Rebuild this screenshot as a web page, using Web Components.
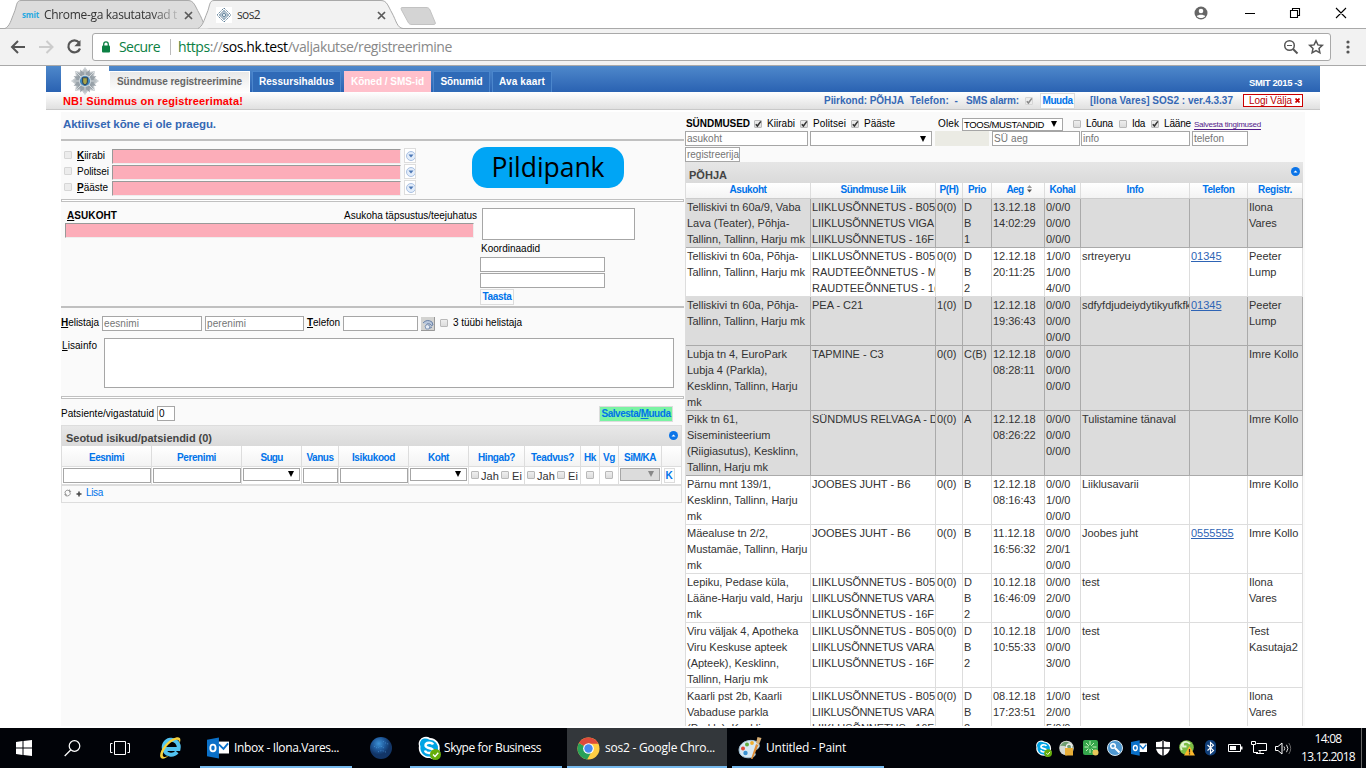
<!DOCTYPE html>
<html lang="et">
<head>
<meta charset="utf-8">
<title>sos2</title>
<style>
html,body{margin:0;padding:0;background:#fff}
body{width:1366px;height:768px;overflow:hidden;display:flex;flex-direction:column;font:11px/16px "Liberation Sans",Arial,sans-serif;color:#000}
</style>
</head>
<body>
<browser-frame></browser-frame>
<sos-app></sos-app>
<task-bar></task-bar>
<script>
const define = (name, css, html) => customElements.define(name, class extends HTMLElement {
  constructor() {
    super();
    this.attachShadow({mode: 'open'}).innerHTML = `<style>*{box-sizing:border-box}${css}</style>${html}`;
  }
});

/* Text that is tracked to fill a given width (w, in pixels). */
customElements.define('fit-text', class extends HTMLElement {
  constructor() {
    super();
    this.attachShadow({mode: 'open'}).innerHTML = '<style>:host{display:inline-block;white-space:pre;flex:none}span{display:inline-block}</style><span><slot></slot></span>';
  }
  connectedCallback() {
    const w = parseFloat(this.getAttribute('w'));
    if (!w) return;
    const s = this.shadowRoot.querySelector('span');
    s.style.letterSpacing = '0px';
    const n = this.textContent.length;
    s.style.letterSpacing = ((w - s.getBoundingClientRect().width) / n) + 'px';
    this.style.width = w + 'px';
  }
});
const T = (w, t, x = 0, st = '') => `<fit-text w="${w}" style="margin-left:${x}px;${st}">${t}</fit-text>`;

define('ui-check', `:host{display:block;flex:none;width:8px;height:8px;border:1px solid #b9b9b9;border-radius:1px;background:linear-gradient(#eee,#dcdcdc);box-sizing:border-box}
:host([dim]){border-color:#d6d6d6;background:#ececec}
svg{display:none;overflow:visible}:host([on]) svg{display:block}:host([dim]) path{stroke:#888}`,
`<svg width="6" height="6" viewBox="0 0 6 6"><path d="M.8 3.2 2.4 5 5.8.4" fill="none" stroke="#333" stroke-width="1.5"/></svg>`);
const C = (x, a = '') => `<ui-check ${a} style="margin-left:${x}px;margin-top:-1px"></ui-check>`;

define('ui-field', `:host{display:flex;align-items:center;flex:none;box-sizing:border-box;height:15px;border:1px solid #a6a6a6;background:#fff;color:#757575;padding-left:1px;overflow:hidden;line-height:15px;white-space:nowrap}
:host([req]){background:#fcadb9;border-color:#999 #eee #eee #999}
:host([off]){background:#dcdcdc}
i{display:none;margin-left:auto;margin-right:5px;border:3.5px solid transparent;border-top:6px solid #000;border-bottom:0}
:host([sel]) i{display:block}:host([off]) i{border-top-color:#888}`, `<slot></slot><i></i>`);
const F = (x, w, t = '', a = '', st = '') => `<ui-field ${a} style="margin-left:${x}px;width:${w}px;${st}">${t}</ui-field>`;

define('ui-button', `:host{display:flex;align-items:center;justify-content:center;flex:none;box-sizing:border-box;height:16px;border:1px solid #dcdcdc;background:#fcfcfc;color:#0073ea;font-weight:bold;font-size:10px;line-height:14px}`, `<slot></slot>`);

define('ui-collapse', `:host{display:block;flex:none;width:9px;height:9px}svg{display:block}`,
`<svg width="9" height="9" viewBox="0 0 8 8"><circle cx="4" cy="4" r="4" fill="#0b74e8"/><path d="M2.200 4.800 4 3.200l1.800 1.600z" fill="#fff"/></svg>`);

/* ---------- browser ---------- */
define('browser-tab', `:host{display:flex;align-items:center;position:relative;flex:none;width:204px;height:29px;font:12px/29px "Open Sans",sans-serif;color:#333;box-sizing:border-box}
.b{position:absolute;left:0;top:0;z-index:0}.b path{fill:#dcdcdc;stroke:#a9a9a9}:host([active]){z-index:1}:host([active]) .b path{fill:#f2f2f2}
slot,.x{position:relative}.c{display:flex;align-items:center;position:relative;width:161px;margin-left:17px;overflow:hidden}.x{margin-left:1px;margin-top:1px}`,
`<svg class="b" width="206" height="29"><path d="M0 28.5C5 26 6 20 9 13S11 .5 16 .5H183C189 .5 190 6 194 13S199 28 205 28.5"/></svg><div class="c"><slot></slot></div><svg class="x" width="9" height="9" viewBox="0 0 9 9"><path d="m1 1 7 7M8 1 1 8" stroke="#5a5a5a" stroke-width="1.7"/></svg>`);

define('browser-frame', `:host{display:block;flex:none;height:66px;font-family:"Open Sans",sans-serif;background:#f2f2f2}
.tabs{display:flex;height:29px;background:#fff;border-bottom:1px solid #a9a9a9}
.tabs browser-tab[active]{margin-left:-11px}.tabs svg{flex:none;display:block}
.fade{-webkit-mask:linear-gradient(90deg,#000 112px,transparent 144px);width:138px}
.bar{display:flex;align-items:center;height:37px;border-bottom:1px solid #a9a9a9;padding-left:10px}
.bar svg{flex:none;display:block}
.omni{display:flex;align-items:center;width:1239px;height:28px;margin-left:10px;border:1px solid #a9a9a9;border-radius:3px;background:#fff;font-size:14px;line-height:26px;margin-top:-1px}
.g{color:#0b8043}.s{color:#888}`,
`<div class="tabs">
<browser-tab style="margin-left:5px"><span style="font:bold 8px/14px 'Open Sans',sans-serif;color:#27a9e1">${T(17,'smit')}</span><span class="fade">${T(133,'Chrome-ga kasutatavad t',5)}</span></browser-tab>
<browser-tab active><svg width="16" height="16" viewBox="0 0 16 16" style="margin-left:1px"><path fill="#fff" d="M0 0h16v16H0z"/><g fill="none" stroke="#5f7f98"><path d="m8 1 7 7-7 7-7-7z" stroke-dasharray="1.5 .8"/><path d="m8 3.5 4.5 4.5L8 12.500 3.500 8z"/><path d="M8 3v10M3 8h10" stroke="#8aa4b7"/><circle cx="8" cy="8" r="1.800" fill="#dfe8ee"/></g></svg>${T(23,'sos2',5)}</browser-tab>
<svg width="38" height="22" style="margin:6px 0 0 -2px"><path d="M2 1.500H26C28 1.500 29 2 30 4L35 16C36 18 35 18.500 33 18.500H12C10 18.500 9 18 8 16L1.500 4C.8 2.500 1 1.500 2 1.500z" fill="#d4d4d4" stroke="#c2c2c2"/></svg>
<svg width="14" height="14" viewBox="0 0 14 14" style="margin:6px 0 0 756px"><circle cx="7" cy="7" r="6.500" fill="#666"/><circle cx="7" cy="5" r="2.300" fill="#fff"/><path d="M2.800 10.200C4 8.200 10 8.200 11.200 10.200 9.500 12.600 4.500 12.600 2.800 10.200z" fill="#fff"/></svg>
<svg width="130" height="26" style="margin-left:30px"><g fill="none" stroke="#000" stroke-width="1.100"><path d="M7 13.500h10M52.500 17.500V10.500h7v7zM54.500 10.500V8.500h7v7H59.500M98 8l10 10M108 8 98 18"/></g></svg>
</div>
<div class="bar">
<svg width="72" height="20" viewBox="0 0 72 20"><path d="M15 10H2M8 4l-6 6 6 6" fill="none" stroke="#555" stroke-width="2"/><path d="M29 10h13M36.500 4l6 6-6 6" fill="none" stroke="#ccc" stroke-width="2"/><path d="M69 5.500A6 6 0 1 0 70 11.500" fill="none" stroke="#555" stroke-width="2.200"/><path d="M70.500 3v6.200h-6.200z" fill="#555"/></svg>
<div class="omni"><svg width="8" height="12" viewBox="0 0 8 12" style="margin-left:9px"><rect y="4.500" width="8" height="7" rx="1" fill="#0b8043"/><path d="M1.700 5V3.200a2.300 2.300 0 0 1 4.600 0V5" fill="none" stroke="#0b8043" stroke-width="1.300"/></svg>
${T(41,'Secure',9,'color:#0b8043')}<span style="width:1px;height:16px;background:#bbb;margin:0 7px 0 10px"></span>${T(274,'<span class="g">https</span><span class="s">://</span>sos.hk.test<span class="s">/valjakutse/registreerimine</span>')}
<svg width="42" height="16" viewBox="0 0 42 16" style="margin-left:auto;margin-right:5px"><g fill="none" stroke="#555"><circle cx="6.500" cy="6.500" r="4.800" stroke-width="1.500"/><path d="m10 10 4.500 4.500" stroke-width="2"/><path d="M4 6.500h5"/><path d="m33 1.800 1.900 4.100 4.400.5-3.300 3 .9 4.400-3.900-2.200-3.900 2.200.9-4.400-3.300-3 4.400-.5z" stroke-width="1.500"/></g></svg></div>
<svg width="4" height="14" style="margin-left:15px"><g fill="#555"><circle cx="2" cy="2" r="1.600"/><circle cx="2" cy="7" r="1.600"/><circle cx="2" cy="12" r="1.600"/></g></svg>
</div>`);

/* ---------- application header ---------- */
const star = (n, R, r) => Array.from({length: n * 2}, (_, i) => {
  const a = Math.PI * i / n, d = i % 2 ? r : R;
  return `${(13 + d * Math.sin(a)).toFixed(1)},${(13 - d * Math.cos(a)).toFixed(1)}`;
}).join(' ');
define('app-header', `:host{display:block;width:1274px;margin-left:46px;flex:none;font-size:10px}
.top{display:flex;height:26px;background:linear-gradient(#4e88cb,#2a62b2);padding-left:15px;font-weight:bold;color:#fff;box-shadow:0 1px 0 #cfe0f2}
.logo{width:48px;height:27px;background:#fff;display:flex;justify-content:center;position:relative}
.t{height:21px;margin-top:5px;border:1px solid #4b86cc;border-bottom:0;background:#2f6ab7;display:flex;align-items:center;justify-content:center;flex:none}
.a{background:linear-gradient(#e8e8e8,#fff);color:#666;border-color:#fff;height:22px;padding-bottom:1px}.p{background:#ffc0cb;border-color:#ffc0cb}
.sub{display:flex;align-items:center;height:18px;padding:1px 0 0 17px;background:linear-gradient(#fff,#e0e0e0);border-bottom:1px solid #c8c8c8;font-weight:bold;color:#3568b4}
.out{display:flex;align-items:center;width:60px;height:13px;border:1px solid #c00;background:#fff;color:#b00;font-weight:normal;margin:-1px 0 0 10px;line-height:11px}`,
`<div class="top"><div class="logo"><svg width="28" height="28" viewBox="0 0 26 26" style="margin-top:1px"><polygon points="${star(8,13,9)}" fill="#c3c8cc"/><polygon points="${star(16,11.5,8)}" fill="#98a1a8"/><g stroke="#e8ecee" stroke-width=".7"><path d="M13 1v24M1 13h24M4.500 4.500l17 17M21.500 4.500l-17 17"/></g><circle cx="13" cy="13" r="5.200" fill="#3f87bd" stroke="#ccd4d8"/><path d="M10.800 10h4.400v4q0 2-2.200 2.800-2.200-.8-2.200-2.800z" fill="#a9a548" stroke="#345"/></svg></div>
<div class="t a" style="width:141px">${T(125,'Sündmuse registreerimine')}</div>
<div class="t" style="width:89px;margin-left:2px">${T(75,'Ressursihaldus')}</div>
<div class="t p" style="width:87px;margin-left:3px">${T(73,'Kõned / SMS-id')}</div>
<div class="t" style="width:57px;margin-left:2px">${T(42,'Sõnumid')}</div>
<div class="t" style="width:60px;margin-left:2px">${T(46,'Ava kaart')}</div>
<span style="margin:9px 0 0 auto;font-size:9.5px;font-weight:bold">${T(53,'SMIT 2015 -3',0,'margin-right:18px')}</span></div>
<div class="sub">${T(180,'NB! Sündmus on registreerimata!',0,'color:#f00;font-size:11px')}${T(80,'Piirkond: PÕHJA',581)}${T(48,'Telefon: &nbsp;-',6)}${T(53,'SMS alarm:',8)}${C(6,'on dim')}<ui-button style="width:35px;margin-left:7px;height:16px">${T(30,'Muuda')}</ui-button>${T(143,'[Ilona Vares] SOS2 : ver.4.3.37',15)}<div class="out">${T(43,'Logi Välja',5)}<svg width="5" height="5" style="margin-left:3px"><path d="m.5.5 4 4M4.500.5l-4 4" stroke="#c00" stroke-width="1.700"/></svg></div></div>`);

/* ---------- registration form ---------- */
const unitRow = (name, w) => `<div class="r" style="height:16px;align-items:flex-start"><ui-check dim style="margin:3px 0 0 3px"></ui-check><fit-text w="${w}" style="margin-left:5px">${name}</fit-text><span style="width:${35-w}px"></span>${F(0,289,'','req','margin-top:1px')}<div class="dd"><svg width="10" height="13" viewBox="0 0 10 13"><circle cx="6" cy="7" r="4.500" fill="#e3edfa" stroke="#a9c0e2"/><path d="M3.500 5.600h5L6 8.600z" fill="#4a76b4"/></svg></div></div>`;
const cols = [90,90,60,37,70,60,56,56,19,19,43,20];
const heads = [['Eesnimi',35],['Perenimi',39],['Sugu',22],['Vanus',27],['Isikukood',43],['Koht',21],['Hingab?',37],['Teadvus?',43],['Hk',12],['Vg',12],['SiM/KA',32],['',0]];
const yesno = `<span style="display:flex;align-items:center">${C(0)}${T(18,'Jah',2)}${C(2)}${T(10,'Ei',3)}</span>`;
const inputs = [F(0,88),F(0,88),F(0,57,'','sel','height:13px;margin-top:-3px'),F(0,35),F(0,68),F(0,57,'','sel','height:13px;margin-top:-3px'),yesno,yesno,C(0),C(0),F(0,40,'','sel off','height:13px;margin-top:-3px'),`<ui-button style="width:11px;height:15px;margin-left:-6px">K</ui-button>`];
define('person-panel', `:host{display:block;width:621px;border:1px solid #ddd;box-sizing:border-box;height:78px}
.h{display:flex;align-items:center;height:20px;background:linear-gradient(#e8e8e8,#dadada);color:#444;font-weight:bold;padding:4px 3px 0 4px;font-size:11px}
.g{display:grid;grid-template-columns:${cols.map(c => c + 'px').join(' ')}}
.g>div{display:flex;align-items:center;justify-content:center;border-right:1px solid #ddd}.g>div:last-child{border:0}
.n{height:21px;border-bottom:1px solid #ddd;background:linear-gradient(#fff,#f3f3f3);color:#0073ea;font-weight:bold;font-size:10px}.n>div{padding-top:3px}
.i{height:19px;border-bottom:2px solid #ddd;background:#fff;color:#333;font-size:11px}
.f{display:flex;align-items:center;height:14px;font-size:10px;color:#0073ea;background:#fafafa}`,
`<div class="h">${T(146,'Seotud isikud/patsiendid (0)')}<ui-collapse style="margin:-5px 0 0 auto"></ui-collapse></div>
<div class="g n">${heads.map(([t,w]) => `<div>${t ? T(w,t) : ''}</div>`).join('')}</div>
<div class="g i">${inputs.map(x => `<div>${x}</div>`).join('')}</div>
<div class="f"><svg width="20" height="8" viewBox="0 0 20 8" style="margin-left:2px"><path d="M1.500 5A2.300 2.300 0 0 1 5.500 2.200M5.800 3A2.300 2.300 0 0 1 1.800 5.800" fill="none" stroke="#999"/><path d="M5 0v3h2.500zM2.500 8V5H0z" fill="#999"/><path d="M12.500 5h5M15 2.500v5" stroke="#444" stroke-width="1.500"/></svg>${T(17,'Lisa',2,'margin-top:-1px')}</div>`);

define('call-form', `:host{display:block;width:624px;flex:none;font-size:10px}
.r{display:flex;align-items:center}
.l{height:2px;background:#c0c0c0}.d{height:3px;border:1px solid #c0c0c0;background:#fff}
.l,.d{width:623px}
.dd{width:12px;height:15px;margin-left:3px;border:1px solid #ddd;background:#fff;overflow:hidden;display:flex}
u{font-weight:bold}.pill{width:152px;height:41px;margin:6px 0 0 56px;border-radius:15px;background:#00a5f5;display:flex;align-items:center;justify-content:center;font:26.5px/36px "Open Sans",sans-serif}
textarea{display:block;border:1px solid #a6a6a6;background:#fff;padding:0;resize:none}`,
`<div class="r" style="height:27px;padding:0 0 3px 2px;font-size:11.5px;font-weight:bold;color:#3568b4">${T(153,'Aktiivset kõne ei ole praegu.')}</div><div class="l"></div>
<div style="display:flex;height:58px"><div style="padding-top:7px;width:355px">${unitRow('<u>K</u>iirabi',28)}${unitRow('Politsei',32)}${unitRow('<u>P</u>ääste',31)}</div><div class="pill">${T(113,'Pildipank',0,'margin-top:-2px')}</div></div><div class="d"></div>
<div style="display:flex;height:104px"><div style="width:419px;padding-top:6px"><div class="r" style="height:15px;padding-top:1px">${T(50,'<u>A</u>SUKOHT',6,'font-weight:bold')}${T(133,'Asukoha täpsustus/teejuhatus',227)}</div>${F(4,409,'','req')}</div>
<div style="padding-top:6px"><textarea style="width:153px;height:32px;margin-left:2px"></textarea><div style="height:17px;padding-top:1px">${T(59,'Koordinaadid',1)}</div>${F(0,125)}${F(0,125,'','','margin-top:1px')}<ui-button style="width:34px;margin-top:1px">${T(29,'Taasta')}</ui-button></div></div><div class="l"></div>
<div style="height:88px"><div class="r" style="height:30px">${T(38,'<u>H</u>elistaja')}${F(3,100,T(35,'eesnimi'))}${F(3,99,T(39,'perenimi'))}${T(33,'<u>T</u>elefon',3)}${F(3,75)}<svg width="14" height="14" style="margin-left:3px;margin-top:2px"><path fill="#d3d3d1" d="M0 0h14v14H0z"/><path d="M13.500 0v13.500H0" fill="none" stroke="#999"/><path d="M2 6q4-4.500 9-1l1 3q-2 1.500-3-1-3-1-4 1l1 3q3 1 5-1" fill="#b7c6dc" stroke="#6a82a7"/><path d="M4 9q2-3 5 0l-1 3H5z" fill="#e5ebf4" stroke="#8197b8"/></svg>${C(5)}${T(69,'3 tüübi helistaja',5)}</div>
<div style="display:flex">${T(35,'<u style="font-weight:normal">L</u>isainfo',1)}<textarea style="margin-left:7px;width:570px;height:50px"></textarea></div></div><div class="d"></div>
<div class="r" style="height:26px;padding-top:3px">${T(93,'Patsiente/vigastatuid')}${F(3,18,'0','','color:#000;margin-top:-1px')}<ui-button style="width:74px;margin-left:424px;background:#7af3a3">${T(69,'Salvesta/<span style="text-decoration:underline">M</span>uuda')}</ui-button></div>
<person-panel></person-panel>`);

/* ---------- event list ---------- */
const L = ['LIIKLUSÕNNETUS - B05', 'LIIKLUSÕNNETUS VIGA', 'LIIKLUSÕNNETUS VARA', 'LIIKLUSÕNNETUS - 16F'];
const z = '0/0/0';
const events = [
 {g:1, c:[['Telliskivi tn 60a/9, Vaba','Lava (Teater), Põhja-','Tallinn, Tallinn, Harju mk'],[L[0],L[1],L[3]],['0(0)'],['D','B','1'],['13.12.18','14:02:29'],[z,z,z],[],[],['Ilona','Vares']]},
 {c:[['Telliskivi tn 60a, Põhja-','Tallinn, Tallinn, Harju mk'],[L[0],'RAUDTEEÕNNETUS - M','RAUDTEEÕNNETUS - 1('],['0(0)'],['D','B','2'],['12.12.18','20:11:25'],['1/0/0','1/0/0','4/0/0'],['srtreyeryu'],['01345'],['Peeter','Lump']]},
 {g:1, c:[['Telliskivi tn 60a, Põhja-','Tallinn, Tallinn, Harju mk'],['PEA - C21'],['1(0)'],['D'],['12.12.18','19:36:43'],[z,z,z],['sdfyfdjudeiydytikyufkfk'],['01345'],['Peeter','Lump']]},
 {g:1, n:4, c:[['Lubja tn 4, EuroPark','Lubja 4 (Parkla),','Kesklinn, Tallinn, Harju','mk'],['TAPMINE - C3'],['0(0)'],['C(B)'],['12.12.18','08:28:11'],[z,z,z],[],[],['Imre Kollo']]},
 {g:1, n:4, c:[['Pikk tn 61,','Siseministeerium','(Riigiasutus), Kesklinn,','Tallinn, Harju mk'],['SÜNDMUS RELVAGA - D'],['0(0)'],['A'],['12.12.18','08:26:22'],[z,z,z],['Tulistamine tänaval'],[],['Imre Kollo']]},
 {c:[['Pärnu mnt 139/1,','Kesklinn, Tallinn, Harju','mk'],['JOOBES JUHT - B6'],['0(0)'],['B'],['12.12.18','08:16:43'],[z,'1/0/0',z],['Liiklusavarii'],[],['Imre Kollo']]},
 {c:[['Mäealuse tn 2/2,','Mustamäe, Tallinn, Harju','mk'],['JOOBES JUHT - B6'],['0(0)'],['B'],['11.12.18','16:56:32'],[z,'2/0/1',z],['Joobes juht'],['0555555'],['Imre Kollo']]},
 {c:[['Lepiku, Pedase küla,','Lääne-Harju vald, Harju','mk'],[L[0],L[2],L[3]],['0(0)'],['D','B','2'],['10.12.18','16:46:09'],[z,'2/0/0',z],['test'],[],['Ilona','Vares']]},
 {n:4, c:[['Viru väljak 4, Apotheka','Viru Keskuse apteek','(Apteek), Kesklinn,','Tallinn, Harju mk'],[L[0],L[2],L[3]],['0(0)'],['D','B','2'],['10.12.18','10:55:33'],['1/0/0',z,'3/0/0'],['test'],[],['Test','Kasutaja2']]},
 {c:[['Kaarli pst 2b, Kaarli','Vabaduse parkla','(Parkla), Kesklinn,'],[L[0],L[2],L[3]],['0(0)'],['D','B','2'],['08.12.18','17:23:51'],['1/0/0','2/0/0','5/0/0'],['test'],[],['Ilona','Vares']]}];
const evCols = '125px 125px 27px 29px 53px 36px 109px 58px 55px';
const evHeads = [['Asukoht',37],['Sündmuse Liik',65],['P(H)',19],['Prio',18],['Aeg',17],['Kohal',26],['Info',17],['Telefon',32],['Registr.',34]];
define('event-table', `:host{display:block;width:618px;border-left:1px solid #ddd;box-sizing:border-box;font-size:11px}
.h{display:flex;align-items:center;height:21px;background:linear-gradient(#e6e6e6,#dadada);color:#444;font-weight:bold;padding:5px 3px 0 3px;font-size:11px}
.g{display:grid;grid-template-columns:${evCols}}
.n{height:16px;background:linear-gradient(#fff,#f3f3f3);border-bottom:1px solid #ccc;color:#0073ea;font-weight:bold;font-size:10px;line-height:13px}
.n>div{display:flex;justify-content:center;border-right:1px solid #ddd}.n svg{margin:2px -2px 0 3px}
.e{height:49px;border-bottom:1px solid #ddd;background:#fff;color:#333;line-height:16px}
.e>div{overflow:hidden;white-space:nowrap;padding-left:1px;border-right:1px solid #ddd;letter-spacing:-.02px}.e>div:first-child{letter-spacing:-.02px}
.e.k{height:65px}.e.s{background:#dcdcdc;border-color:#aaa}.e.s>div{border-color:#aaa}
a{color:#2e64b5;text-decoration:underline}`,
`<div class="h">${T(38,'PÕHJA')}<ui-collapse style="margin:-7px 0 0 auto"></ui-collapse></div>
<div class="g n">${evHeads.map(([t,w],i) => `<div>${T(w,t)}${i===4?'<svg width="5" height="8"><path d="M0 3 2.500 0 5 3z" fill="#999"/><path d="M0 4.500 2.500 7.500 5 4.500z" fill="#555"/></svg>':''}</div>`).join('')}</div>
${events.map(e => `<div class="g e ${e.g?'s':''} ${e.n?'k':''}">${e.c.map((c,i) => `<div>${i===1 ? c.map(t => `<div style="height:16px">${t.startsWith('LIIKLUS') ? T(t===L[0]?123:122,t) : t}</div>`).join('') : c.map(t => i===7?`<a>${t}</a>`:t).join('<br>')}</div>`).join('')}</div>`).join('')}`);

define('event-list', `:host{display:block;flex:1;font-size:10px;min-width:0}
.r{display:flex;align-items:center}`,
`<div class="r" style="height:19px;padding-top:5px">${T(64,'SÜNDMUSED',1,'font-weight:bold')}${C(4,'on')}${T(28,'Kiirabi',5)}${C(5,'on')}${T(33,'Politsei',5)}${C(5,'on')}${T(31,'Pääste',5)}${T(21,'Olek',43)}${F(3,101,T(80,'TOOS/MUSTANDID'),'sel','height:13px;color:#000;font-size:9.5px')}${C(10)}${T(27,'Lõuna',5)}${C(6)}${T(13,'Ida',5)}${C(6,'on')}${T(27,'Lääne',5)}<span style="font-size:8px;color:#551a8b;border-bottom:1px solid;line-height:9px;margin-left:3px;margin-top:2px">${T(67,'Salvesta tingimused')}</span></div>
<div class="r" style="height:15px">${F(0,123,T(35,'asukoht'))}${F(2,122,'','sel')}<span style="width:54px;height:15px;background:#ebebe4;margin-left:3px"></span>${F(3,88,T(34,'SÜ aeg'))}${F(1,109,T(16,'info'))}${F(2,56,T(30,'telefon'))}</div>
<div class="r" style="height:16px;padding-top:1px">${F(0,55,T(52,'registreerija'))}</div>
<event-table></event-table>`);

define('sos-app', `:host{display:block;height:660px;flex:none;overflow:hidden;background:#fff}
.main{display:flex;width:1244px;height:614px;margin:2px 0 0 61px;background:#fafafa}`,
`<app-header></app-header><div class="main"><call-form></call-form><event-list></event-list></div>`);

/* ---------- task bar ---------- */
const skype = s => `<svg width="${s}" height="${s}" viewBox="0 0 24 24"><path d="M7 1a7 7 0 0 1 6 1 10 10 0 0 1 9.500 12A6.500 6.500 0 0 1 13 22 10 10 0 0 1 2 10 7 7 0 0 1 7 1z" fill="#fff"/><path d="M7 2.500q3-.5 5.500 1.200a8.500 8.500 0 0 1 8.500 10A5.500 5.500 0 0 1 12.500 20.500 8.500 8.500 0 0 1 3.500 10.500 5.500 5.500 0 0 1 7 2.500z" fill="#00a4e4"/><path d="M16 8.500C15 6 8.500 6 8.500 9.500S16.200 11.500 16 14.500 9 18 8 14.500" fill="none" stroke="#fff" stroke-width="2.400"/><circle cx="18.500" cy="18.500" r="5.500" fill="#65ad0b"/><path d="m16 18.500 2 2 3.300-3.800" fill="none" stroke="#fff" stroke-width="1.300"/></svg>`;
const outlook = s => `<svg width="${s}" height="${s}" viewBox="0 0 24 24"><path d="M11 5h13v13H11z" fill="#fff"/><path d="m13 8 5 5 5-6" fill="none" stroke="#0a70c8" stroke-width="2"/><path d="M0 3 13 .5v23L0 21z" fill="#0a70c8"/><ellipse cx="6.500" cy="12" rx="2.900" ry="3.700" fill="none" stroke="#fff" stroke-width="2"/></svg>`;
define('task-item', `:host{display:flex;align-items:center;flex:none;height:40px;box-sizing:border-box;border-bottom:2px solid #76b9ed;padding-top:2px;padding-left:7px;color:#fff;font:12px/36px "Open Sans",sans-serif}:host([active]){background:#33373b;padding-left:10px}`, `<slot></slot>`);
define('task-bar', `:host{display:flex;align-items:center;flex:none;height:40px;margin-top:2px;background:#010308;color:#fff;font-family:"Open Sans",sans-serif}
svg{display:block;flex:none}.tray{display:flex;align-items:center;margin-left:147px}.tray>span{width:24px;display:flex;justify-content:center}
.clock{width:74px;font-size:12px;line-height:18px;text-align:center;padding-bottom:1px}`,
`<svg width="16" height="16" style="margin-left:16px"><path d="M0 2 6.500 1v6.500H0zM7.500.9 16 0v7.500H7.500zM0 8.500h6.500V15L0 14zM7.500 8.500H16V16l-8.500-1z" fill="#fff"/></svg>
<svg width="17" height="17" viewBox="0 0 17 17" style="margin-left:32px"><circle cx="10.500" cy="6" r="5.300" fill="none" stroke="#fff" stroke-width="1.200"/><path d="M6.700 10 .7 16" stroke="#fff" stroke-width="1.200"/></svg>
<svg width="20" height="15" style="margin-left:29px"><path d="M4.500.5h11v13h-11zM2.500 2.500h-2v9h2M17.500 2.500h2v9h-2" fill="none" stroke="#fff"/></svg>
<svg width="24" height="24" viewBox="0 0 24 24" style="margin-left:29px"><path d="M18 16A7.500 7.500 0 1 1 19.500 13H6.500" fill="none" stroke="#52c3f1" stroke-width="4"/><path d="M2 22C-2 18 8 3 17 1.500 22 .5 22 4 20.500 7.500 21 4 18.500 2.800 15.500 4.200 9 7 2.500 16 4 20c.8 1.800 4 .8 6-.5C7 22.500 3.500 23.500 2 22z" fill="#f8d13b"/></svg>
<task-item style="width:152px;margin-left:17px">${outlook(22)}${T(105,'Inbox - Ilona.Vares...',5)}</task-item>
<svg width="22" height="22" viewBox="0 0 22 22" style="margin-left:18px"><defs><radialGradient id="gl" cx=".4" cy=".3"><stop stop-color="#3d92d6"/><stop offset=".6" stop-color="#1e5798"/><stop offset="1" stop-color="#123566"/></radialGradient></defs><circle cx="11" cy="11" r="11" fill="url(#gl)"/><path d="M4 9q3 3 5 1t6 2M8 15q4-3 9 1M13 4q3 3 6 3" fill="none" stroke="#4f9bdc" stroke-width=".8" stroke-dasharray="1 1.500"/></svg>
<task-item style="width:152px;margin-left:18px">${skype(24)}${T(97,'Skype for Business',3)}</task-item>
<task-item active style="width:160px;margin-left:5px"><svg width="23" height="23" viewBox="0 0 24 24"><circle cx="12" cy="12" r="11.500" fill="#ffce44"/><path d="M12 12 2 6.300A11.500 11.500 0 0 0 10.500 23.400L16 14z" fill="#28a159"/><path d="M12 12 2 6.300A11.500 11.500 0 0 1 22.300 7H12z" fill="#de4a3b"/><circle cx="12" cy="12" r="5.600" fill="#fff"/><circle cx="12" cy="12" r="4.400" fill="#4688f1"/></svg>${T(110,'sos2 - Google Chro...',5)}</task-item>
<task-item style="width:152px;margin-left:5px;padding-left:6px"><svg width="24" height="24" viewBox="0 0 24 24"><path d="M1 14C1 8 8 3.500 15 4.500c5 .8 7 4 6 6.500-1 3-4 2-4.500 4s2 3 0 5c-3 3-15.500 3-15.500-6z" fill="#d7e9f4" stroke="#9dbdd0"/><circle cx="5" cy="12.500" r="2" fill="#e04736"/><circle cx="9" cy="8.500" r="2" fill="#61ad42"/><circle cx="14" cy="7" r="1.900" fill="#efae30"/><circle cx="7.500" cy="17" r="2.200" fill="#3991d1"/><path d="m13 23 5-15 2.500 1-6 14z" fill="#de8d36"/><path d="M18 7 19.500 1l4 1-2.500 6.500z" fill="#d7ad73"/></svg>${T(80,'Untitled - Paint',4)}</task-item>
<div class="tray"><span>${skype(17)}</span>
<span><svg width="16" height="16" viewBox="0 0 16 16"><circle cx="7.500" cy="8" r="7.300" fill="#d5dad5"/><path d="M1 6q6-9 13 1l-3 3q-4-5-10-4z" fill="#6d9c70"/><path d="M7.500 8V6.500a2.500 2.500 0 0 1 5 0V8" fill="none" stroke="#eee" stroke-width="1.300"/><path d="M6 8h8v7.500H6z" fill="#e7ae38"/></svg></span>
<span><svg width="16" height="16" viewBox="0 0 16 16"><rect width="15" height="15" rx="2" fill="#35a64c"/><path d="M7 1v12M1.500 7h12M3 3l8 8M11 3l-8 8" stroke="#c9f5bd" stroke-dasharray="4 4"/><circle cx="12.500" cy="12.500" r="3" fill="#e8c85a"/></svg></span>
<span><svg width="16" height="16" viewBox="0 0 16 16"><circle cx="8" cy="8" r="7.500" fill="#4d97d0" stroke="#d7e8f3"/><circle cx="6" cy="6" r="2.300" fill="none" stroke="#fff" stroke-width="1.500"/><path d="m8 8 4.500 4.500" stroke="#fff" stroke-width="2"/></svg></span>
<span>${outlook(16)}</span>
<span><svg width="16" height="16" viewBox="0 0 16 16"><path d="M8 .5q3 1.500 7 1.500v6q0 5-7 8-7-3-7-8V2q4 0 7-1.500z" fill="#fff"/><path d="M8 1v15M1 8h14" stroke="#010308" stroke-width="1.300"/></svg></span>
<span><svg width="16" height="16" viewBox="0 0 16 16"><circle cx="7.500" cy="7.500" r="7.300" fill="#7cbd45"/><path d="M3 10A5 5 0 0 1 11 4M4 3v3.500h3.500" fill="none" stroke="#e4f5d3" stroke-width="1.800"/><path d="M10.500 6 16 15.500H5z" fill="#fbb72b"/><path d="M10.500 9v3.500M10.500 13.300v1.200" stroke="#222" stroke-width="1.200"/></svg></span>
<span><svg width="12" height="16" viewBox="0 0 12 16"><rect width="11" height="15.500" rx="5" fill="#103f7a"/><path d="m2.500 5 6 5.500-3 2.700V2.500l3 2.700-6 5.300" fill="none" stroke="#fff" stroke-width="1.100"/></svg></span>
<span><svg width="15" height="10"><path d="M.5 1.500h12v7H.5z" fill="none" stroke="#fff"/><path d="M2 3h6v4H2zM13 3.500h1.500v3H13z" fill="#fff"/></svg></span>
<span><svg width="16" height="14"><path d="M5.500 2.500h10v7h-8M.5.500h4v3h-4zM2.500 3.500v8H7M5 12.500h8M9 10v2" fill="none" stroke="#fff"/></svg></span>
<span><svg width="17" height="13"><path d="M.5 4.500h2.500l4-3.500v11L3 8.500H.5z" fill="none" stroke="#fff"/><path d="M9 4.500q1.500 2 0 4M11.500 2.800q2.800 3.700 0 7.400" fill="none" stroke="#ddd"/><path d="M13.800 1q3.800 5.500 0 11" fill="none" stroke="#666"/></svg></span></div>
<div class="clock" style="margin-left:-4px">${T(27,'14:08')}<br>${T(54,'13.12.2018')}</div><span style="width:1px;height:40px;background:#666;margin-left:-4px"></span>`);
</script>
</body>
</html>
